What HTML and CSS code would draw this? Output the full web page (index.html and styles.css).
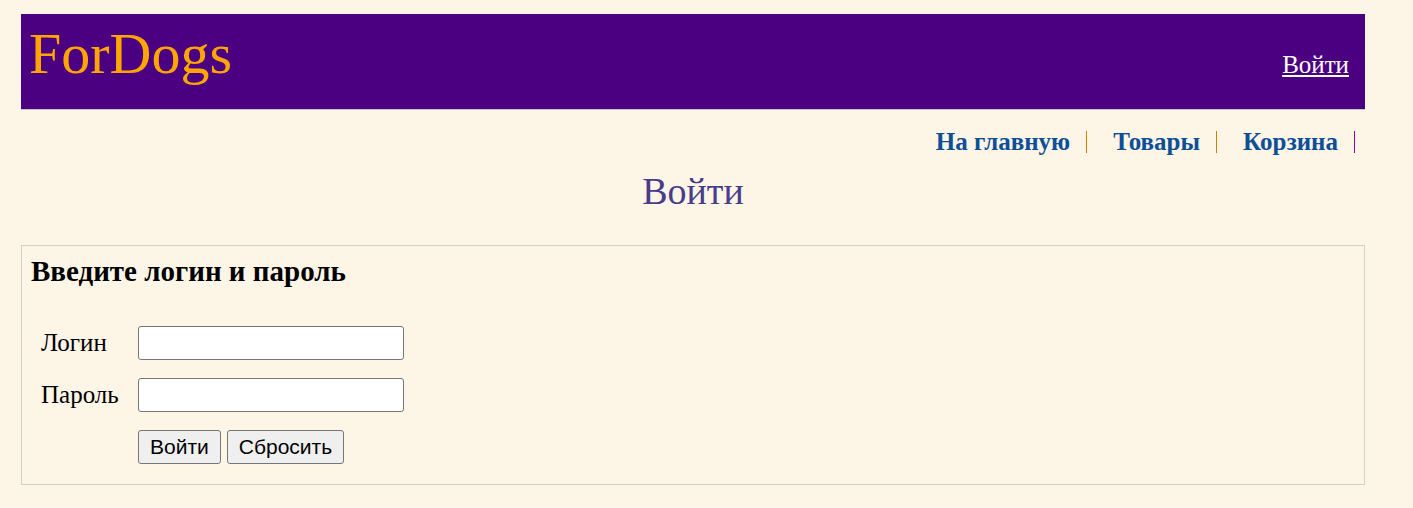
FILE: index.html
```html
<!DOCTYPE html>
<html lang="ru">
<head>
<meta charset="utf-8">
<title>ForDogs — Войти</title>
<link rel="stylesheet" href="styles.css">
</head>
<body>
<div class="page">
  <header class="header">
    <div class="logo">ForDogs</div>
    <a class="login-link" href="#">Войти</a>
  </header>
  <nav class="nav">
    <a class="nav-item" href="#">На главную</a>
    <a class="nav-item" href="#">Товары</a>
    <a class="nav-item nav-last" href="#">Корзина</a>
  </nav>
  <h1 class="title">Войти</h1>
  <section class="box">
    <h3 class="box-title">Введите логин и пароль</h3>
    <form class="form">
      <label class="label" for="login">Логин</label>
      <input class="field" id="login" type="text">
      <label class="label" for="pass">Пароль</label>
      <input class="field" id="pass" type="password">
      <div class="buttons">
        <button class="btn" type="submit">Войти</button>
        <button class="btn" type="reset">Сбросить</button>
      </div>
    </form>
  </section>
</div>
</body>
</html>
```

FILE: styles.css
```css
html, body {
  margin: 0;
  padding: 0;
  background: #fdf5e6;
}
body {
  font-family: "Liberation Serif", "Times New Roman", serif;
  color: #000;
}
.page {
  width: 1344px;
  margin: 0;
  padding: 14px 0 0 21px;
}
.header {
  background: #4b0082;
  height: 95px;
  border-bottom: 1px solid #c9c2c9;
  display: flex;
  justify-content: space-between;
  align-items: flex-start;
  box-sizing: content-box;
}
.logo {
  color: #ffa500;
  font-size: 58px;
  line-height: 1;
  padding: 11px 0 0 8px;
}
.login-link {
  color: #fff;
  font-size: 25px;
  margin: 37px 16px 0 0;
  line-height: 1.15;
}
.nav {
  display: flex;
  justify-content: flex-end;
  padding: 21px 10px 0 0;
}
.nav-item {
  font-weight: bold;
  font-size: 25px;
  color: #0d4f97;
  text-decoration: none;
  line-height: 22px;
  padding-right: 16px;
  border-right: 1px solid #cc8000;
  margin-left: 26px;
}
.nav-last {
  border-right-color: #990099;
}
.title {
  margin: 16px 0 0 0;
  text-align: center;
  font-weight: normal;
  font-size: 38px;
  color: #483d8b;
  line-height: 44px;
}
.box {
  margin-top: 32px;
  border: 1px solid #d3cfc9;
  padding: 10px 10px 20px 9px;
}
.box-title {
  margin: 0;
  font-size: 29px;
  line-height: 30px;
  font-weight: bold;
}
.form {
  display: grid;
  grid-template-columns: 97px 266px;
  row-gap: 18px;
  align-items: center;
  margin: 40px 0 0 10px;
}
.label {
  font-size: 25px;
}
.field {
  width: 266px;
  height: 34px;
  box-sizing: border-box;
  border: 1px solid #767676;
  border-radius: 3px;
  background: #fff;
  margin: 0;
}
.buttons {
  grid-column: 2;
  display: flex;
  gap: 6px;
}
.btn {
  font-family: "Liberation Sans", Arial, sans-serif;
  font-size: 21px;
  height: 34px;
  padding: 0 11px;
  background: #efefef;
  border: 1px solid #767676;
  border-radius: 3px;
  color: #000;
  margin: 0;
}
```
